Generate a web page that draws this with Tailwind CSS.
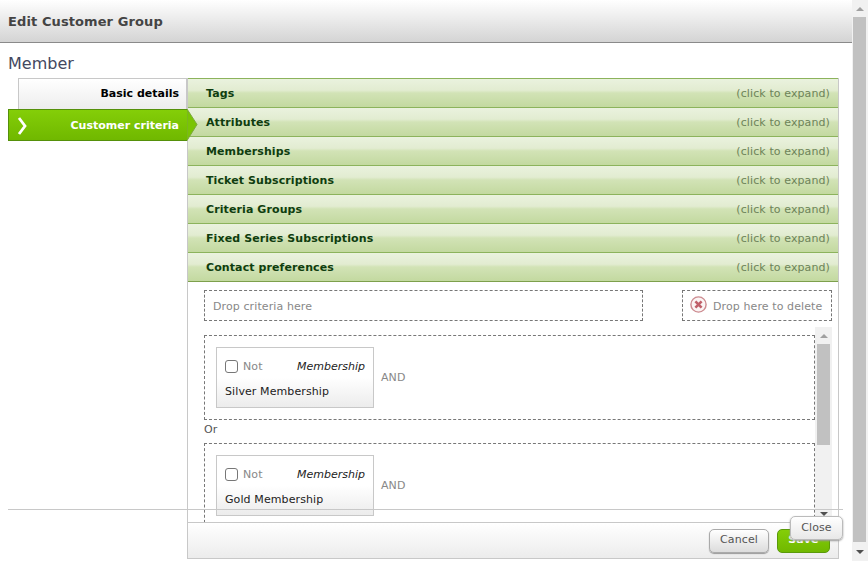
<!DOCTYPE html>
<html lang="en">
  <head>
    <meta charset="UTF-8" />
    <script src="https://cdn.jsdelivr.net/npm/@tailwindcss/browser@4"></script>
    <title>Edit Customer Group</title>
  </head>
  <body class="bg-white font-['DejaVu_Sans',sans-serif] text-[11px] tracking-[0.1px] overflow-hidden">
    <div class="relative flex w-[868px] h-[561px] overflow-hidden">
      <div class="w-[852px] shrink-0">
        <!-- header -->
        <div class="h-[43px] pl-2 pt-[2px] flex items-center border-b border-[#8a8a8a] bg-gradient-to-b from-white to-[#d4d4d4]">
          <h1 class="text-[13px] font-bold text-[#444]">Edit Customer Group</h1>
        </div>
        <h2 class="pl-2 pt-[11px] h-[35px] text-[16px] leading-[19px] tracking-normal text-[#444860]">Member</h2>
        <div class="flex">
          <!-- side tabs -->
          <div class="w-[179px] ml-2 shrink-0">
            <div class="ml-[10px] h-[31px] border border-b-0 border-[#c8c8c8] bg-gradient-to-b from-white to-[#ededed] flex items-center justify-end pr-[7px] font-bold tracking-normal text-black">Basic details</div>
            <div class="relative h-[32px] pt-[2px] border border-[#55900a] border-r-0 bg-gradient-to-b from-[#84ce08] to-[#70b800] flex items-center justify-between pr-2 pl-[8px] font-bold tracking-normal text-white">
              <svg width="11" height="18" viewBox="0 0 11 18"><path d="M2 1 L8 9 L2 17" fill="none" stroke="white" stroke-width="2.8"/></svg>
              <span>Customer criteria</span>
              <svg class="absolute left-[178px] -top-px" width="11" height="32" viewBox="0 0 11 32"><path d="M0 0 L10 15.5 L0 31.5 Z" fill="#7ac404" stroke="#7aa83a"/></svg>
            </div>
          </div>
          <!-- accordion -->
          <div class="w-[650px] h-[480px] border-r border-l border-[#c8c8c8] box-content flex flex-col border-b">
            <div class="h-[29px] pt-[2px] shrink-0 flex items-center justify-between pl-[18px] pr-2 border-t border-[#8cb35c] bg-[linear-gradient(#eaf2de_0,#e2ecd1_40%,#d2e3b6_50%,#c3d9a0_100%)] font-bold text-[#0f3d0f]"><span>Tags</span><span class="font-normal text-[#6d8359]">(click to expand)</span></div>
            <div class="h-[29px] pt-[2px] shrink-0 flex items-center justify-between pl-[18px] pr-2 border-t border-[#8cb35c] bg-[linear-gradient(#eaf2de_0,#e2ecd1_40%,#d2e3b6_50%,#c3d9a0_100%)] font-bold text-[#0f3d0f]"><span>Attributes</span><span class="font-normal text-[#6d8359]">(click to expand)</span></div>
            <div class="h-[29px] pt-[2px] shrink-0 flex items-center justify-between pl-[18px] pr-2 border-t border-[#8cb35c] bg-[linear-gradient(#eaf2de_0,#e2ecd1_40%,#d2e3b6_50%,#c3d9a0_100%)] font-bold text-[#0f3d0f]"><span>Memberships</span><span class="font-normal text-[#6d8359]">(click to expand)</span></div>
            <div class="h-[29px] pt-[2px] shrink-0 flex items-center justify-between pl-[18px] pr-2 border-t border-[#8cb35c] bg-[linear-gradient(#eaf2de_0,#e2ecd1_40%,#d2e3b6_50%,#c3d9a0_100%)] font-bold text-[#0f3d0f]"><span>Ticket Subscriptions</span><span class="font-normal text-[#6d8359]">(click to expand)</span></div>
            <div class="h-[29px] pt-[2px] shrink-0 flex items-center justify-between pl-[18px] pr-2 border-t border-[#8cb35c] bg-[linear-gradient(#eaf2de_0,#e2ecd1_40%,#d2e3b6_50%,#c3d9a0_100%)] font-bold text-[#0f3d0f]"><span>Criteria Groups</span><span class="font-normal text-[#6d8359]">(click to expand)</span></div>
            <div class="h-[29px] pt-[2px] shrink-0 flex items-center justify-between pl-[18px] pr-2 border-t border-[#8cb35c] bg-[linear-gradient(#eaf2de_0,#e2ecd1_40%,#d2e3b6_50%,#c3d9a0_100%)] font-bold text-[#0f3d0f]"><span>Fixed Series Subscriptions</span><span class="font-normal text-[#6d8359]">(click to expand)</span></div>
            <div class="h-[30px] pt-[2px] shrink-0 flex items-center justify-between pl-[18px] pr-2 border-t border-b border-t-[#8cb35c] border-b-[#7da04c] bg-[linear-gradient(#eaf2de_0,#e2ecd1_40%,#d2e3b6_50%,#c3d9a0_100%)] font-bold text-[#0f3d0f]"><span>Contact preferences</span><span class="font-normal text-[#6d8359]">(click to expand)</span></div>
            <!-- criteria panel -->
            <div class="h-[240px] shrink-0 overflow-hidden pl-4 pr-[6px]">
              <div class="flex justify-between pt-2">
                <div class="w-[439px] h-[31px] border border-dashed border-[#777] flex items-center pl-2 pt-1 text-[#888]">Drop criteria here</div>
                <div class="w-[150px] h-[31px] border border-dashed border-[#777] flex items-center pl-[7px] gap-[6px] text-[#888]">
                  <svg class="mb-[2px]" width="17" height="17" viewBox="0 0 17 17"><circle cx="8.5" cy="8.5" r="7.6" fill="#fbf4f4" stroke="#cc8a8f" stroke-width="1.4"/><path d="M5.4 5.4 L11.6 11.6 M11.6 5.4 L5.4 11.6" stroke="#c0606a" stroke-width="2.6"/></svg>
                  <span class="pt-1">Drop here to delete</span>
                </div>
              </div>
              <div class="flex justify-between mt-[6px]">
                <div class="w-[611px] pt-2">
                  <div class="h-[85px] border border-dashed border-[#777] flex items-center pl-[11px] gap-[7px]">
                    <div class="w-[158px] h-[61px] border border-[#c8c8c8] bg-gradient-to-b from-white from-50% to-[#ececec] px-2 pt-[11px]">
                      <div class="flex items-center justify-between h-[16px]">
                        <div class="flex items-center gap-[5px] text-[#888]"><span class="w-[13px] h-[13px] -mt-[2px] rounded-[3px] border border-[#777] bg-white"></span>Not</div>
                        <i class="text-[#222] tracking-normal">Membership</i>
                      </div>
                      <div class="mt-[9px] text-[#222]">Silver Membership</div>
                    </div>
                    <span class="text-[#888] pt-[2px]">AND</span>
                  </div>
                  <div class="h-[23px] pb-[2px] flex items-center text-[#555]">Or</div>
                  <div class="h-[85px] border border-dashed border-[#777] flex items-center pl-[11px] gap-[7px]">
                    <div class="w-[158px] h-[61px] border border-[#c8c8c8] bg-gradient-to-b from-white from-50% to-[#ececec] px-2 pt-[11px]">
                      <div class="flex items-center justify-between h-[16px]">
                        <div class="flex items-center gap-[5px] text-[#888]"><span class="w-[13px] h-[13px] -mt-[2px] rounded-[3px] border border-[#777] bg-white"></span>Not</div>
                        <i class="text-[#222] tracking-normal">Membership</i>
                      </div>
                      <div class="mt-[9px] text-[#222]">Gold Membership</div>
                    </div>
                    <span class="text-[#888] pt-[2px]">AND</span>
                  </div>
                </div>
                <!-- inner scrollbar -->
                <div class="w-[17px] h-[195px] bg-[#f1f1f1] flex flex-col items-center shrink-0">
                  <div class="h-[17px] flex items-center"><div class="w-0 h-0 border-x-[4px] border-x-transparent border-b-[4px] border-b-[#a0a0a0]"></div></div>
                  <div class="w-[13px] h-[101px] bg-[#c1c1c1]"></div>
                  <div class="flex-1"></div>
                  <div class="h-[17px] flex items-center"><div class="w-0 h-0 border-x-[4px] border-x-transparent border-t-[4px] border-t-[#505050]"></div></div>
                </div>
              </div>
            </div>
            <!-- footer -->
            <div class="flex-1 border-t border-[#c8c8c8] bg-gradient-to-b from-white to-[#ececec] flex items-center justify-end gap-2 pr-2">
              <button class="w-[60px] h-[24px] rounded-[5px] border border-[#aaa] bg-gradient-to-b from-white to-[#dcdcdc] text-[#555] shadow-[0_1px_1px_#999]">Cancel</button>
              <button class="w-[53px] h-[24px] rounded-[5px] border border-[#5a9a0a] bg-gradient-to-b from-[#84ce08] to-[#70b800] font-bold text-white">Save</button>
            </div>
          </div>
        </div>
      </div>
      <!-- page scrollbar -->
      <div class="w-4 h-full bg-[#f1f1f1] flex flex-col items-start pl-px">
        <div class="h-[17px] w-[13px] flex items-center justify-center"><div class="w-0 h-0 border-x-[4px] border-x-transparent border-b-[4px] border-b-[#a0a0a0]"></div></div>
        <div class="w-[13px] flex-1 bg-[#c1c1c1]"></div>
        <div class="h-[19px] w-[13px] flex items-center justify-center"><div class="w-0 h-0 border-x-[4px] border-x-transparent border-t-[4px] border-t-[#505050]"></div></div>
      </div>
      <!-- overlays -->
      <div class="absolute left-2 top-[509px] w-[835px] h-px bg-[#c8c8c8]"></div>
      <div class="absolute left-[790px] top-[516px] w-[53px] h-[24px] rounded-[5px] border border-[#bbb] bg-gradient-to-b from-white to-[#e8e8e8] shadow-[0_1px_2px_#999] flex items-center justify-center text-[#555]">Close</div>
    </div>
  </body>
</html>
